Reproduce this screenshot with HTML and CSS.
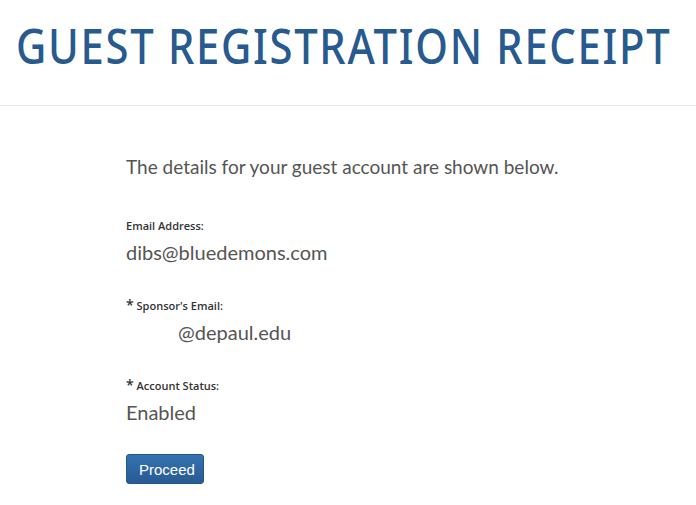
FILE: index.html
```html
<!DOCTYPE html>
<html lang="en">
<head>
    <meta charset="UTF-8">
    <meta name="viewport" content="width=device-width, initial-scale=1.0">
    <title>Guest Registration Receipt</title>
    <link rel="stylesheet" href="styles.css">
</head>
<body>
    <div class="page-header">
        <h1>Guest Registration Receipt</h1>
    </div>

    <div class="content">
        <p class="intro">The details for your guest account are shown below.</p>

        <div class="field">
            <div class="field-label">Email Address:</div>
            <div class="field-value">dibs@bluedemons.com</div>
        </div>

        <div class="field">
            <div class="field-label"><span class="req">*</span> Sponsor's Email:</div>
            <div class="field-value"><span class="sponsor-user"></span>@depaul.edu</div>
        </div>

        <div class="field last">
            <div class="field-label"><span class="req">*</span> Account Status:</div>
            <div class="field-value">Enabled</div>
        </div>

        <button class="btn-proceed">Proceed</button>
    </div>
</body>
</html>
```

FILE: styles.css
```css
body {
    margin: 0;
    font-family: Lato, sans-serif;
    background-color: #fff;
    color: #555;
}
.page-header {
    border-bottom: 1px solid #dde8f0;
    height: 106px;
    box-sizing: border-box;
    padding: 19px 0 0 16px;
    overflow: hidden;
}
h1 {
    display: inline-block;
    margin: 0;
    font-family: "Noto Sans", sans-serif;
    font-weight: 500;
    font-size: 49px;
    line-height: 52px;
    letter-spacing: 2px;
    white-space: nowrap;
    text-transform: uppercase;
    color: #275a8f;
    transform: scaleX(0.852);
    transform-origin: left center;
}
.content {
    padding: 48px 0 0 126px;
}
.intro {
    margin: 0 0 38px;
    font-size: 19px;
    line-height: 26px;
}
.field {
    margin-bottom: 32px;
}
.field.last {
    margin-bottom: 29px;
}
.field-label {
    font-family: "Open Sans", sans-serif;
    font-size: 11px;
    font-weight: 600;
    color: #333;
    line-height: 16px;
}
.req {
    font-size: 14px;
}
.field-value {
    font-size: 20px;
    line-height: 26px;
    margin-top: 5px;
}
.sponsor-user {
    display: inline-block;
    width: 52px;
}
.btn-proceed {
    font-family: "Liberation Sans", Arial, sans-serif;
    font-size: 15px;
    color: #fff;
    padding: 0 12px;
    width: 78px;
    height: 30px;
    border: 1px solid #245689;
    border-radius: 3px;
    background: linear-gradient(#3472b1, #285b93);
    cursor: pointer;
}
```
